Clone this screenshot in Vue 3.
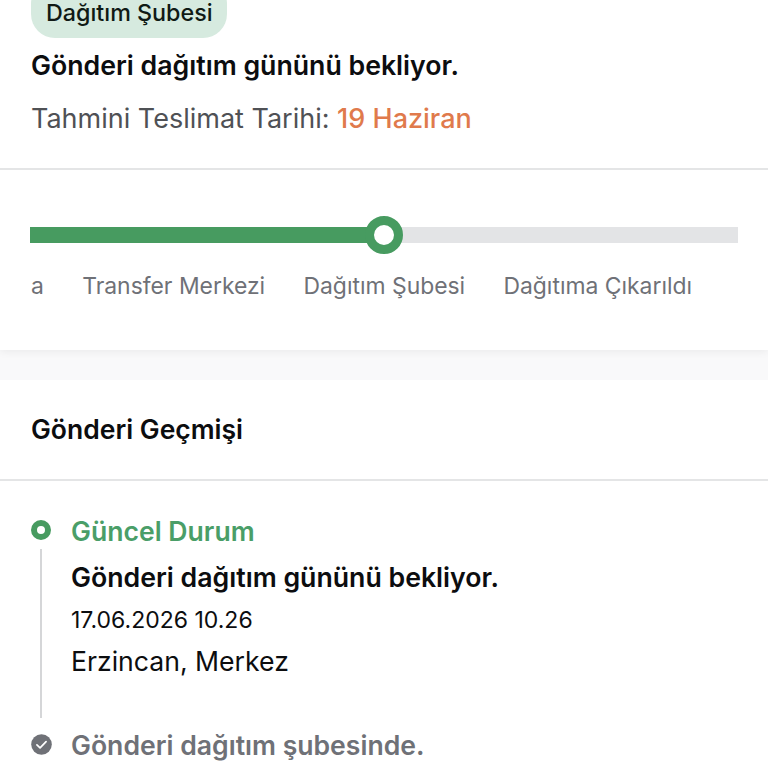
<script setup>
const steps = ["a", "Transfer Merkezi", "Dağıtım Şubesi", "Dağıtıma Çıkarıldı"];
const progress = 50;
</script>

<template>
  <div class="page">
    <section class="card">
      <div class="summary">
        <span class="pill">Dağıtım Şubesi</span>
        <h2 class="status">Gönderi dağıtım gününü bekliyor.</h2>
        <p class="eta">Tahmini Teslimat Tarihi: <span class="eta-date">19 Haziran</span></p>
      </div>
      <div class="tracker">
        <div class="bar">
          <div class="bar-fill" :style="{ width: progress + '%' }"></div>
          <div class="thumb" :style="{ left: progress + '%' }"></div>
        </div>
        <div class="steps">
          <span v-for="step in steps" :key="step">{{ step }}</span>
        </div>
      </div>
    </section>

    <section class="card history">
      <h3 class="history-title">Gönderi Geçmişi</h3>
      <div class="timeline">
        <div class="event current">
          <div class="rail">
            <span class="dot"></span>
            <span class="line"></span>
          </div>
          <div class="event-body">
            <div class="event-label">Güncel Durum</div>
            <div class="event-title">Gönderi dağıtım gününü bekliyor.</div>
            <div class="event-date">17.06.2026 10.26</div>
            <div class="event-place">Erzincan, Merkez</div>
          </div>
        </div>
        <div class="event">
          <div class="rail">
            <svg class="check" viewBox="0 0 22 22" width="21" height="21">
              <circle cx="11" cy="11" r="10.8" fill="#6f7177" />
              <path d="M6.2 11.4l3.3 3.2 6.3-6.6" fill="none" stroke="#fff" stroke-width="1.8" stroke-linecap="round" stroke-linejoin="round" />
            </svg>
            <span class="line"></span>
          </div>
          <div class="event-body">
            <div class="event-label muted">Gönderi dağıtım şubesinde.</div>
          </div>
        </div>
      </div>
    </section>
  </div>
</template>

<style scoped>
.page {
  height: 768px;
  overflow: hidden;
  display: flex;
  flex-direction: column;
  gap: 30px;
  background: #f9f9fa;
  font-family: Inter, "Noto Sans", sans-serif;
  color: #0c0d0f;
}

.card {
  background: #fff;
}

.card:first-child {
  box-shadow: 0 2px 8px rgba(0, 0, 0, 0.06);
}

.summary {
  height: 170px;
  padding: 0 31px;
  border-bottom: 2px solid #e4e5e6;
  box-sizing: border-box;
}

.pill {
  display: inline-flex;
  align-items: center;
  height: 58px;
  margin-top: -20px;
  padding: 7px 14.5px 0 15px;
  box-sizing: border-box;
  background: #d6eadf;
  border-radius: 24px;
  font-size: 23.3px;
  line-height: 1;
  font-weight: 500;
  color: #101a15;
}

.status {
  margin: 8px 0 0;
  font-size: 26.7px;
  line-height: 38px;
  font-weight: 600;
}

.eta {
  margin: 16px 0 0;
  font-size: 27px;
  line-height: 38px;
  color: #4f5155;
}

.eta-date {
  color: #e07a4c;
  font-weight: 500;
}

.tracker {
  height: 180px;
  padding: 57px 30px 0;
  box-sizing: border-box;
}

.bar {
  position: relative;
  height: 16px;
  background: #e3e4e6;
}

.bar-fill {
  height: 100%;
  background: #479b60;
}

.thumb {
  position: absolute;
  top: 50%;
  width: 20px;
  height: 20px;
  border: 9px solid #479b60;
  border-radius: 50%;
  background: #fff;
  transform: translate(-50%, -50%);
}

.steps {
  display: flex;
  gap: 38.3px;
  margin-top: 28px;
  padding-left: 1px;
  font-size: 22.9px;
  line-height: 30px;
  color: #6f7177;
  white-space: nowrap;
}

.history {
  flex: 1;
}

.history-title {
  margin: 0;
  height: 101px;
  padding: 29px 31px 0;
  box-sizing: border-box;
  border-bottom: 2px solid #e4e5e6;
  font-size: 26.5px;
  line-height: 40px;
  font-weight: 600;
}

.timeline {
  padding: 35px 31px 0;
}

.event {
  display: flex;
  gap: 20px;
}

.rail {
  display: flex;
  flex-direction: column;
  align-items: center;
  width: 20px;
  flex-shrink: 0;
}

.dot {
  width: 8px;
  height: 8px;
  margin-top: 4px;
  border: 6.5px solid #479b60;
  border-radius: 50%;
  background: #fff;
  flex-shrink: 0;
}

.check {
  margin-top: 4px;
  flex-shrink: 0;
}

.line {
  flex: 1;
  width: 2px;
  margin: 9px 0 12px;
  background: #d5d6d8;
}

.event-body {
  flex: 1;
  min-width: 0;
}

.current .event-body {
  padding-bottom: 52px;
}

.event-label {
  font-size: 26.6px;
  line-height: 30px;
  font-weight: 600;
  color: #4a9e68;
}

.event-label.muted {
  color: #6f7177;
}

.event-title {
  margin-top: 15px;
  font-size: 26.7px;
  line-height: 32px;
  font-weight: 600;
}

.event-date {
  margin-top: 12px;
  font-size: 23px;
  line-height: 30px;
}

.event-place {
  margin-top: 9px;
  font-size: 26.6px;
  line-height: 34px;
}
</style>
